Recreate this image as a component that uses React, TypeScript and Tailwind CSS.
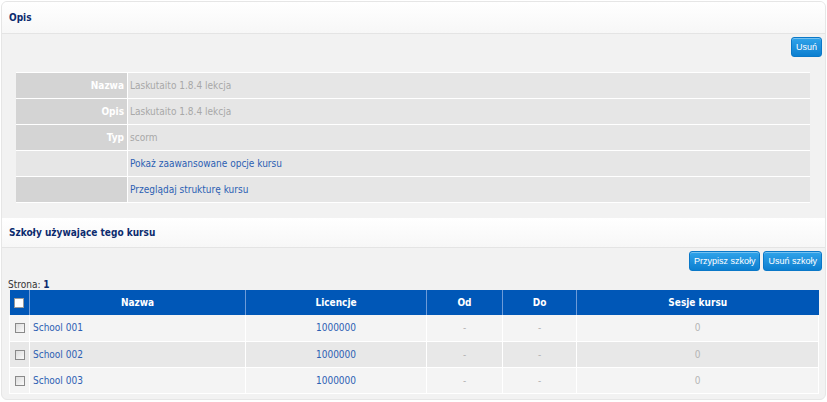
import { FC } from 'react';

type InfoRow = {
    label: string;
    value: string;
    link?: boolean;
    darkLabel: boolean;
};

type School = {
    id: number;
    name: string;
    licences: string;
    from: string;
    to: string;
    sessions: number;
};

const infoRows: InfoRow[] = [
    { label: 'Nazwa', value: 'Laskutaito 1.8.4 lekcja', darkLabel: true },
    { label: 'Opis', value: 'Laskutaito 1.8.4 lekcja', darkLabel: true },
    { label: 'Typ', value: 'scorm', darkLabel: true },
    { label: '', value: 'Pokaż zaawansowane opcje kursu', link: true, darkLabel: false },
    { label: '', value: 'Przeglądaj strukturę kursu', link: true, darkLabel: true },
];

const schools: School[] = [
    { id: 1, name: 'School 001', licences: '1000000', from: '-', to: '-', sessions: 0 },
    { id: 2, name: 'School 002', licences: '1000000', from: '-', to: '-', sessions: 0 },
    { id: 3, name: 'School 003', licences: '1000000', from: '-', to: '-', sessions: 0 },
];

// small blue glossy button used across the admin panel
const BlueButton: FC<{ label: string }> = ({ label }) => (
    <button className="h-[20px] px-[4px] rounded-[3px] border border-[#0a78c8] bg-gradient-to-b from-[#2fa3ea] to-[#0a7fd0] text-white text-[9px] font-['Liberation_Sans',sans-serif] leading-none shadow-[inset_0_1px_0_rgba(255,255,255,0.35)]">
        {label}
    </button>
);

const CheckBox: FC<{ header?: boolean }> = ({ header }) => (
    <span
        className={
            header
                ? 'inline-block w-[10px] h-[10px] border border-[#9a9a9a] bg-white align-middle'
                : 'inline-block w-[10px] h-[10px] border border-[#8a8a8a] bg-gradient-to-br from-[#dcdcdc] to-[#fafafa] align-middle'
        }
    />
);

const SectionHeader: FC<{ title: string }> = ({ title }) => (
    <div className="h-[30px] flex items-center px-[7px] bg-gradient-to-b from-white to-[#f7f7f7] border-b border-[#e4e4e4]">
        <h2 className="text-[10px] font-bold text-[#0c2b6e]">{title}</h2>
    </div>
);

const App: FC = () => {
    return (
        <main className="w-[827px] h-[402px] bg-white px-px pt-px font-['DejaVu_Sans_Condensed','DejaVu_Sans',sans-serif] text-[10px]">
            <div className="rounded-[6px] border border-[#e6e6e6] bg-[#f2f2f2] overflow-hidden">
                <div className="h-[32px] flex items-center px-[7px] bg-gradient-to-b from-white to-[#f7f7f7] border-b border-[#e4e4e4]">
                    <h2 className="text-[10px] font-bold text-[#0c2b6e]">Opis</h2>
                </div>

                {/* course info */}
                <div className="pt-[3px] pb-[15px]">
                    <div className="flex justify-end pr-[3px]">
                        <BlueButton label="Usuń" />
                    </div>
                    <div className="ml-[14px] mr-[15px] mt-[15px] border-t border-white">
                        {infoRows.map((row, i) => (
                            <div key={i} className="flex h-[26px] border-b border-white">
                                <div
                                    className={`w-[112px] shrink-0 border-r border-white flex items-center justify-end pr-[3px] font-bold text-white ${row.darkLabel ? 'bg-[#d4d4d4]' : 'bg-[#e6e6e6]'}`}
                                >
                                    {row.label}
                                </div>
                                <div className="flex-1 bg-[#e6e6e6] flex items-center pl-[2px]">
                                    {row.link ? (
                                        <a className="text-[#2c5fb3] cursor-pointer">{row.value}</a>
                                    ) : (
                                        <span className="text-[#a8a8a8]">{row.value}</span>
                                    )}
                                </div>
                            </div>
                        ))}
                    </div>
                </div>

                <SectionHeader title="Szkoły używające tego kursu" />

                {/* schools */}
                <div className="pt-[3px] pb-[5px]">
                    <div className="flex justify-end gap-[3px] pr-[3px]">
                        <BlueButton label="Przypisz szkoły" />
                        <BlueButton label="Usuń szkoły" />
                    </div>
                    <p className="mt-[8px] pl-[6px] leading-[11px] text-[#333]">
                        Strona: <span className="font-bold text-[#0c2b6e]">1</span>
                    </p>
                    <table className="ml-[7px] w-[809px] table-fixed border-collapse">
                        <colgroup>
                            <col className="w-[20px]" />
                            <col className="w-[216px]" />
                            <col className="w-[181px]" />
                            <col className="w-[76px]" />
                            <col className="w-[74px]" />
                            <col className="w-[242px]" />
                        </colgroup>
                        <thead>
                            <tr className="h-[25px] bg-[#0057b7] text-white font-bold">
                                <th className="border-r border-[#6d9bd8] text-center">
                                    <CheckBox header />
                                </th>
                                <th className="border-r border-[#6d9bd8] text-center">Nazwa</th>
                                <th className="border-r border-[#6d9bd8] text-center">Licencje</th>
                                <th className="border-r border-[#6d9bd8] text-center">Od</th>
                                <th className="border-r border-[#6d9bd8] text-center">Do</th>
                                <th className="text-center">Sesje kursu</th>
                            </tr>
                        </thead>
                        <tbody>
                            {schools.map((s, i) => (
                                <tr key={s.id} className={`h-[26px] ${i % 2 === 1 ? 'bg-[#e8e8e8]' : 'bg-[#f4f4f4]'}`}>
                                    <td className="border-x border-b border-white text-center">
                                        <CheckBox />
                                    </td>
                                    <td className="border-x border-b border-white pl-[3px]">
                                        <a className="text-[#2c5fb3] cursor-pointer">{s.name}</a>
                                    </td>
                                    <td className="border-x border-b border-white text-center text-[#2c5fb3]">{s.licences}</td>
                                    <td className="border-x border-b border-white text-center text-[#b4b4b4]">{s.from}</td>
                                    <td className="border-x border-b border-white text-center text-[#b4b4b4]">{s.to}</td>
                                    <td className="border-x border-b border-white text-center text-[#b4b4b4]">{s.sessions}</td>
                                </tr>
                            ))}
                        </tbody>
                    </table>
                </div>
            </div>
        </main>
    );
};

export default App;
